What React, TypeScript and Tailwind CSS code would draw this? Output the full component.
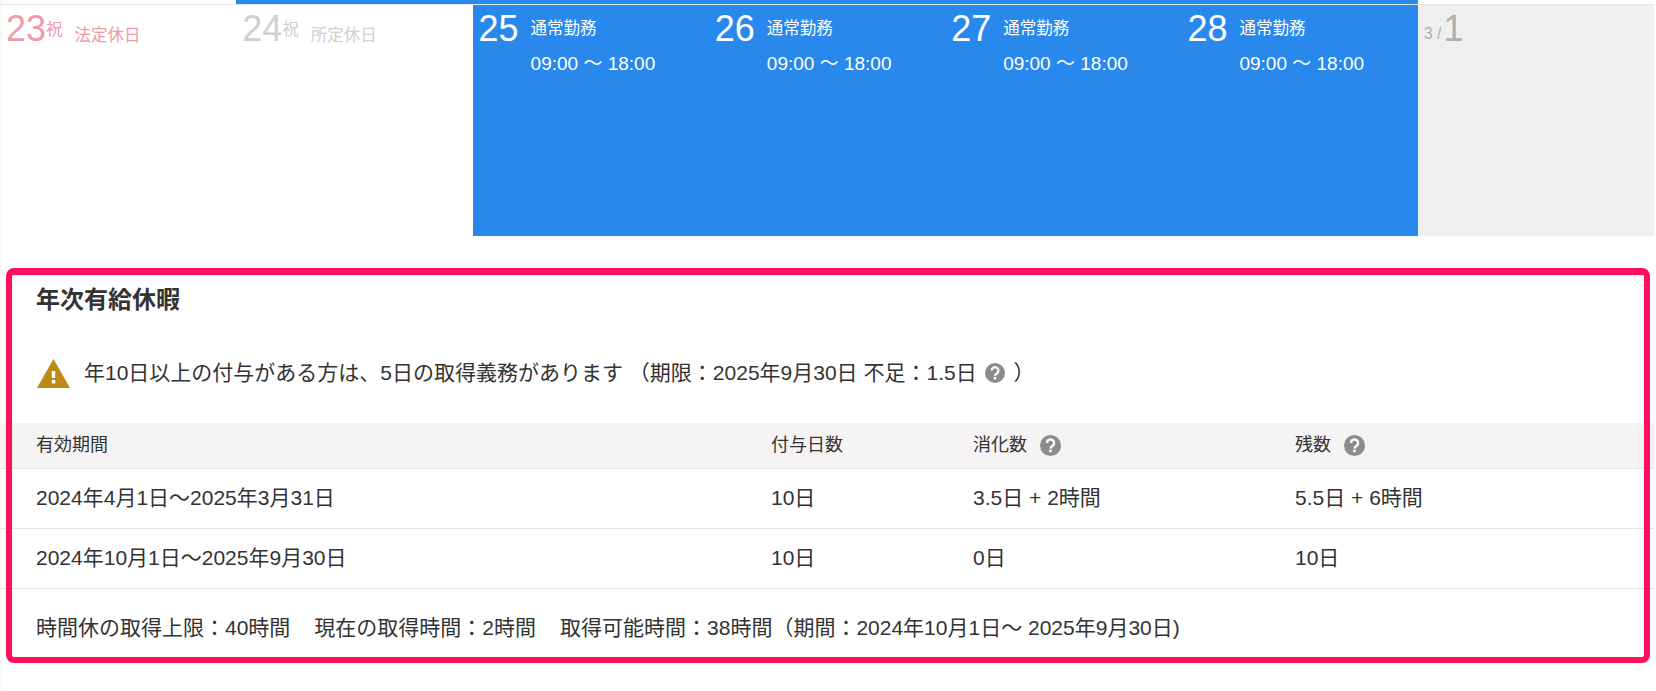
const FONT = "font-['Liberation_Sans','Noto_Sans_CJK_JP',sans-serif]";

const days = [
  { day: "25" },
  { day: "26" },
  { day: "27" },
  { day: "28" },
];

function Help({ size = 20, className = "" }: { size?: number; className?: string }) {
  return (
    <svg width={size} height={size} viewBox="0 0 20 20" className={`shrink-0 ${className}`}>
      <circle cx="10" cy="10" r="10" fill="#8c8c8c" />
      <path
        d="M6.6 7.6a3.4 3.4 0 1 1 5.2 2.9c-1.2.7-1.8 1.1-1.8 2.3"
        fill="none"
        stroke="#fff"
        strokeWidth="2.3"
      />
      <rect x="8.8" y="14" width="2.4" height="2.4" fill="#fff" />
    </svg>
  );
}

function Warning() {
  return (
    <svg width="33" height="29" viewBox="0 0 33 29" className="shrink-0">
      <polygon points="16.5,0 33,29 0,29" fill="#bd8a14" />
      <rect x="14.8" y="12" width="3.4" height="7" fill="#fff" />
      <rect x="14.8" y="21" width="3.4" height="3.4" fill="#fff" />
    </svg>
  );
}

function Holiday({ day, label, color }: { day: string; label: string; color: string }) {
  return (
    <div className={`h-[231px] pl-[6px] flex items-start ${color}`}>
      <span className="text-[36px] leading-[44px] mt-[2px]">{day}</span>
      <span className="text-[16.5px] leading-[20px] mt-[14px]">祝</span>
      <span className="text-[16.5px] leading-[20px] mt-[20px] ml-[12px]">{label}</span>
    </div>
  );
}

function WorkDay({ day }: { day: string }) {
  return (
    <div className="h-[231px] bg-[#2888ec] text-white pl-[6px] flex items-start">
      <span className="text-[36px] leading-[44px] mt-[2px] w-[52px]">{day}</span>
      <div>
        <p className="text-[16.5px] leading-[20px] mt-[13px]">通常勤務</p>
        <p className="text-[19px] leading-[24px] mt-[14px]">09:00 ～ 18:00</p>
      </div>
    </div>
  );
}

const rows = [
  { period: "2024年4月1日～2025年3月31日", given: "10日", used: "3.5日 + 2時間", left: "5.5日 + 6時間" },
  { period: "2024年10月1日～2025年9月30日", given: "10日", used: "0日", left: "10日" },
];

const COLS = "grid grid-cols-[771px_202px_322px_1fr] items-center border-b border-[#e5e5e5]";

export default function App() {
  return (
    <div className={`${FONT} h-[691px] bg-white text-[#333] overflow-hidden shadow-[inset_4px_0_4px_-4px_rgba(0,0,0,0.08)]`}>
      {/* 上部バー */}
      <div className="h-[5px] mr-[2px] border-b border-[#e5e5e5] flex">
        <div className="w-[236px]" />
        <div className="w-[1182px] h-[4px] bg-[#2888ec]" />
      </div>

      {/* カレンダー */}
      <div className="grid grid-cols-7 mr-[2px]">
        <Holiday day="23" label="法定休日" color="text-[#f09aa8]" />
        <Holiday day="24" label="所定休日" color="text-[#cfcfcf]" />
        {days.map((d) => (
          <WorkDay key={d.day} day={d.day} />
        ))}
        <div className="h-[231px] bg-[#efefef] text-[#b0b0b0] pl-[6px] flex items-start">
          <span className="text-[16px] leading-[20px] mt-[19px]">3 /</span>
          <span className="text-[36px] leading-[44px] mt-[2px] ml-[2px]">1</span>
        </div>
      </div>

      {/* 年次有給休暇 */}
      <section className="relative mt-[32px] mr-[2px]">
        <h2 className="pl-9 pt-[16px] h-[48px] text-[24px] leading-[32px] font-bold">年次有給休暇</h2>

        <div className="mt-[37px] mb-[30px] h-[40px] pl-[37px] flex items-center text-[21px]">
          <Warning />
          <span className="ml-[14px] whitespace-pre">年10日以上の付与がある方は、5日の取得義務があります （期限：2025年9月30日 不足：1.5日 </span>
          <Help className="ml-[2px] mr-[9px]" />
          <span>）</span>
        </div>

        <div className={`${COLS} h-[46px] bg-[#f5f3f4] text-[18px]`}>
          <div className="pl-9 pb-[1px]">有効期間</div>
          <div className="pb-[1px]">付与日数</div>
          <div className="flex items-center gap-[13px]">
            <span className="pb-[1px]">消化数</span>
            <Help size={21} />
          </div>
          <div className="flex items-center gap-[13px]">
            <span className="pb-[1px]">残数</span>
            <Help size={21} />
          </div>
        </div>

        {rows.map((r) => (
          <div key={r.period} className={`${COLS} h-[60px] pb-[2px] text-[21px]`}>
            <div className="pl-9">{r.period}</div>
            <div>{r.given}</div>
            <div>{r.used}</div>
            <div>{r.left}</div>
          </div>
        ))}

        <div className="h-[74px] pt-[4px] pl-9 flex items-center gap-[24px] text-[21px] whitespace-pre">
          <span>時間休の取得上限：40時間</span>
          <span>現在の取得時間：2時間</span>
          <span>取得可能時間：38時間（期間：2024年10月1日～ 2025年9月30日)</span>
        </div>

        {/* 注釈の枠 */}
        <div className="absolute inset-y-0 left-[6px] right-[4px] border-[6px] border-t-[7px] border-[#ff1159] rounded-[8px] pointer-events-none" />
      </section>
    </div>
  );
}
